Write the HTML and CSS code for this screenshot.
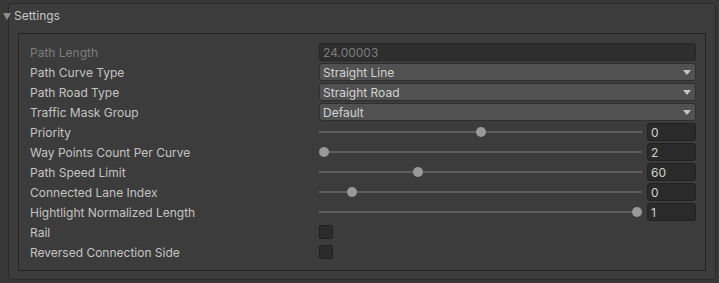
FILE: index.html
```html
<!DOCTYPE html>
<html lang="en">

<head>
  <meta charset="UTF-8">
  <meta name="viewport" content="width=device-width, initial-scale=1.0">
  <title>Settings</title>
  <link rel="stylesheet" href="styles.css">
</head>

<body>
  <div class="panel">
    <div class="foldout">
      <span class="fold-arrow"></span>
      <span class="fold-title">Settings</span>
    </div>

    <div class="group">
      <div class="row disabled">
        <label>Path Length</label>
        <div class="textfield">24.00003</div>
      </div>
      <div class="row">
        <label>Path Curve Type</label>
        <div class="dropdown">Straight Line<span class="caret"></span></div>
      </div>
      <div class="row">
        <label>Path Road Type</label>
        <div class="dropdown">Straight Road<span class="caret"></span></div>
      </div>
      <div class="row">
        <label>Traffic Mask Group</label>
        <div class="dropdown">Default<span class="caret"></span></div>
      </div>

      <div class="row">
        <label>Priority</label>
        <div class="slider">
          <div class="track"><span class="thumb" style="left: 50%"></span></div>
          <div class="numfield">0</div>
        </div>
      </div>
      <div class="row">
        <label>Way Points Count Per Curve</label>
        <div class="slider">
          <div class="track"><span class="thumb" style="left: 0%"></span></div>
          <div class="numfield">2</div>
        </div>
      </div>
      <div class="row">
        <label>Path Speed Limit</label>
        <div class="slider">
          <div class="track"><span class="thumb" style="left: 30%"></span></div>
          <div class="numfield">60</div>
        </div>
      </div>
      <div class="row">
        <label>Connected Lane Index</label>
        <div class="slider">
          <div class="track"><span class="thumb" style="left: 8.8%"></span></div>
          <div class="numfield">0</div>
        </div>
      </div>
      <div class="row">
        <label>Hightlight Normalized Length</label>
        <div class="slider">
          <div class="track"><span class="thumb" style="left: 100%"></span></div>
          <div class="numfield">1</div>
        </div>
      </div>

      <div class="row">
        <label>Rail</label>
        <div class="field"><span class="checkbox"></span></div>
      </div>
      <div class="row">
        <label>Reversed Connection Side</label>
        <div class="field"><span class="checkbox"></span></div>
      </div>
    </div>
  </div>
</body>

</html>
```

FILE: styles.css
```css
body {
  background: #383838;
  font-family: Inter, "Noto Sans", sans-serif;
  font-size: 12px;
  color: #c4c4c4;
  margin: 0;
  padding: 3px 3px 3px 8px;
  height: 283px;
  box-sizing: border-box;
}

.panel {
  height: 277px;
  box-sizing: border-box;
  background: #3c3c3c;
  border: 1px solid #2a2a2a;
  border-radius: 3px;
  padding: 0 9px 8px 9px;
  display: flex;
  flex-direction: column;
}

.foldout {
  display: flex;
  align-items: center;
  height: 22px;
  margin: 0 0 7px -15px;
  gap: 3px;
}

.fold-arrow {
  width: 0;
  height: 0;
  border-left: 4px solid transparent;
  border-right: 4px solid transparent;
  border-top: 7px solid #8c8c8c;
  margin-top: 2px;
}

.fold-title {
  color: #c8c8c8;
}

.group {
  flex: 1;
  border: 1px solid #232323;
  padding: 9px 9px 0 11px;
  display: flex;
  flex-direction: column;
  gap: 2px;
}

.row {
  display: flex;
  align-items: center;
  height: 18px;
}

.row label {
  width: 289px;
  flex-shrink: 0;
  white-space: nowrap;
}

.row.disabled label {
  color: #7d7d7d;
}

.textfield,
.dropdown,
.numfield {
  height: 18px;
  box-sizing: border-box;
  border-radius: 3px;
  display: flex;
  align-items: center;
  padding-left: 3px;
}

.textfield {
  flex: 1;
  background: #2e2e2e;
  border: 1px solid #262626;
  color: #7d7d7d;
}

.dropdown {
  flex: 1;
  position: relative;
  background: #515151;
  border: 1px solid #2f2f2f;
  color: #d2d2d2;
}

.caret {
  position: absolute;
  right: 4px;
  top: 6px;
  width: 0;
  height: 0;
  border-left: 4px solid transparent;
  border-right: 4px solid transparent;
  border-top: 5px solid #c4c4c4;
}

.slider {
  flex: 1;
  display: flex;
  align-items: center;
  gap: 5px;
}

.track {
  flex: 1;
  height: 2px;
  background: #5e5e5e;
  position: relative;
  margin: 0 5px;
}

.track::before {
  content: "";
  position: absolute;
  left: -5px;
  right: -5px;
  top: 0;
  height: 2px;
  background: #5e5e5e;
}

.thumb {
  position: absolute;
  top: -4px;
  width: 10px;
  height: 10px;
  margin-left: -5px;
  border-radius: 50%;
  background: #999999;
  z-index: 1;
}

.numfield {
  width: 49px;
  background: #2a2a2a;
  border: 1px solid #212121;
  color: #d2d2d2;
}

.field {
  flex: 1;
  display: flex;
  align-items: center;
}

.checkbox {
  width: 14px;
  height: 14px;
  box-sizing: border-box;
  background: #2b2b2b;
  border: 1px solid #202020;
  border-radius: 2px;
}
```
